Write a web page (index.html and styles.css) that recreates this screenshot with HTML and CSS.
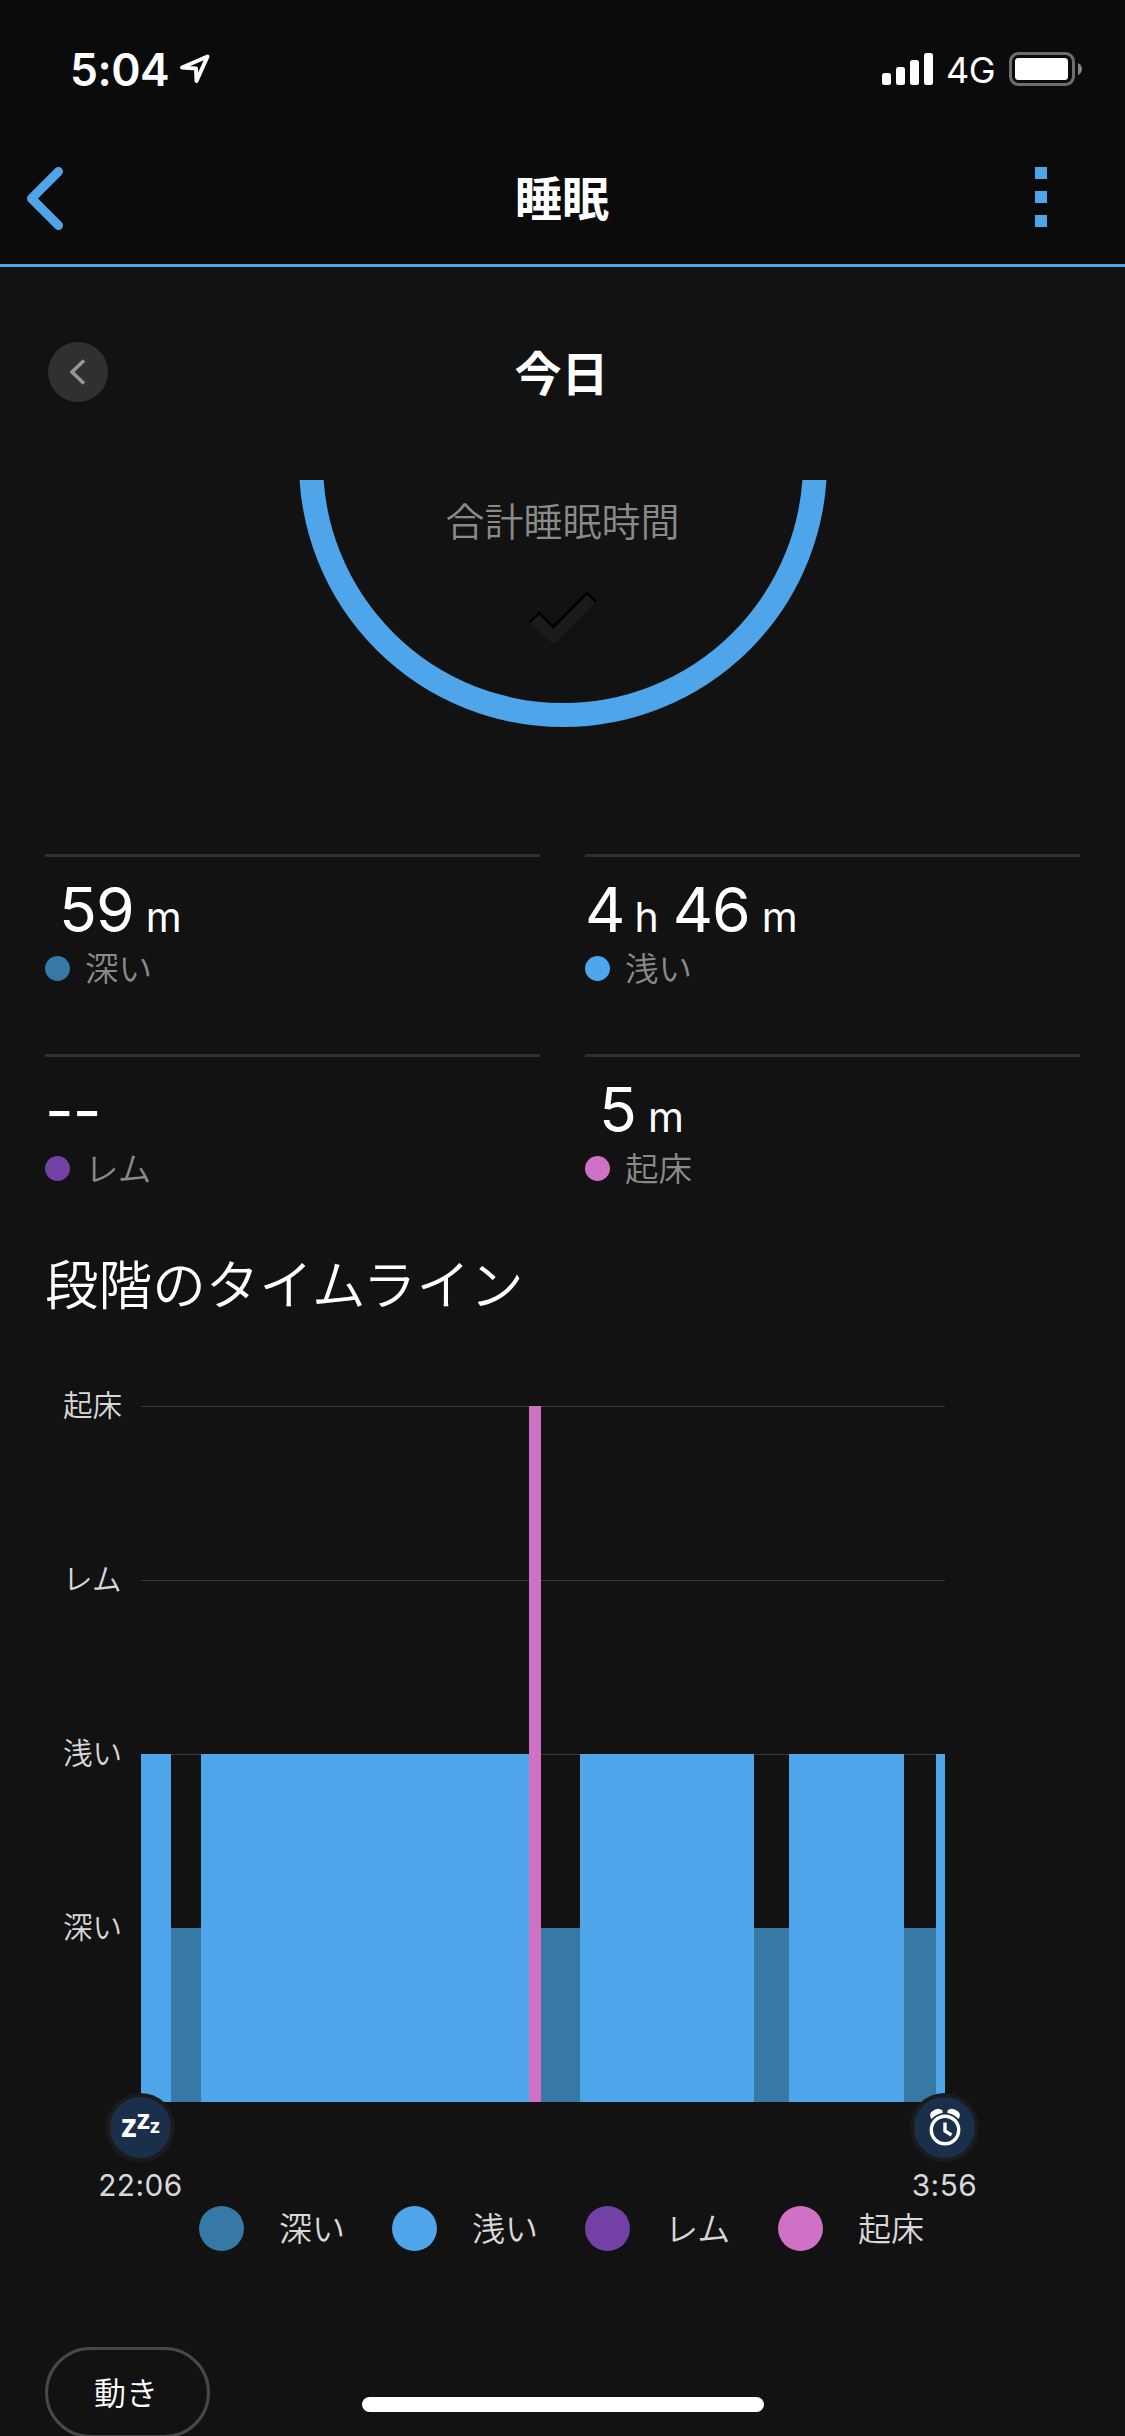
FILE: index.html
```html
<!DOCTYPE html>
<html lang="ja">
<head>
<meta charset="utf-8">
<title>睡眠</title>
<link rel="stylesheet" href="styles.css">
</head>
<body>
<div class="screen">
  <header class="top">
    <div class="status">
      <div class="status-left">
        <span class="clock">5:04</span>
        <svg class="locate" width="32" height="32" viewBox="0 0 32 32"><path d="M3 14.500 28.500 3.500 17.500 28 17 15.500Z"/></svg>
      </div>
      <div class="status-right">
        <svg width="51" height="32" viewBox="0 0 51 32" fill="#fff"><rect y="20" width="9" height="12" rx="2.5"/><rect x="14" y="14" width="9" height="18" rx="2.5"/><rect x="28" y="7" width="9" height="25" rx="2.5"/><rect x="42" width="9" height="32" rx="2.5"/></svg>
        <span class="network">4G</span>
        <svg width="74" height="34" viewBox="0 0 74 34"><rect x="1.5" y="1.5" width="63" height="31" rx="8" fill="none" stroke="#6d6d6d" stroke-width="3"/><rect x="6" y="6" width="53" height="22" rx="3.5" fill="#fff"/><path d="M69 11q4 2 4 6t-4 6z" fill="#858585"/></svg>
      </div>
    </div>
    <nav class="nav">
      <svg class="back" width="44" height="70" viewBox="0 0 44 70"><path d="M36.5 8.5 9.5 35.5 36.5 62.5"/></svg>
      <h1>睡眠</h1>
      <div class="more"><i></i><i></i><i></i></div>
    </nav>
  </header>

  <section class="day">
    <button class="prev"><svg width="60" height="60" viewBox="0 0 60 60"><path d="M36 18.5 24 30 36 41.5"/></svg></button>
    <h2>今日</h2>
  </section>

  <section class="total">
    <svg class="ring" width="528" height="247" viewBox="0 0 528 247"><circle cx="264" cy="-17" r="252"/></svg>
    <div class="total-content">
      <span>合計睡眠時間</span>
      <svg width="68" height="54" viewBox="0 0 68 54"><path d="M1 31 10 22 24.500 36 58 2 67 11 28.500 50Q24.500 54 20.500 50Z" fill="#1b1b1b"/><path d="M1 31 10 22 24.500 36 58 2 67 11" fill="none" stroke="#000" stroke-width="2.500"/></svg>
    </div>
  </section>

  <section class="stats">
    <div class="stat"><p class="value indent">59<small>m</small></p><p class="label"><i class="deep"></i><span>深い</span></p></div>
    <div class="stat"><p class="value">4<small>h</small><b>46</b><small>m</small></p><p class="label"><i class="light"></i><span>浅い</span></p></div>
    <div class="stat"><p class="value none">--</p><p class="label"><i class="rem"></i><span>レム</span></p></div>
    <div class="stat"><p class="value indent">5<small>m</small></p><p class="label"><i class="awake"></i><span>起床</span></p></div>
  </section>

  <h3 class="heading">段階のタイムライン</h3>

  <section class="chart">
    <div class="axis"><span>起床</span><span>レム</span><span>浅い</span><span>深い</span></div>
    <div class="plot">
      <i class="bar light" style="width:30px"></i>
      <i class="bar deep" style="width:30px"></i>
      <i class="bar light" style="width:328px"></i>
      <i class="bar awake" style="width:12px"></i>
      <i class="bar deep" style="width:39px"></i>
      <i class="bar light" style="width:174px"></i>
      <i class="bar deep" style="width:35px"></i>
      <i class="bar light" style="width:115px"></i>
      <i class="bar deep" style="width:32px"></i>
      <i class="bar light" style="width:9px"></i>
    </div>
  </section>

  <section class="ends">
    <div class="end">
      <div class="badge zzz"><span class="z1">z</span><span class="z2">z</span><span class="z3">z</span></div>
      <time>22:06</time>
    </div>
    <div class="end">
      <div class="badge"><svg width="32" height="38" viewBox="0 0 32 38" fill="none" stroke="#fff"><circle cx="16" cy="22" r="13.700" stroke-width="3.400"/><path d="M16 14.500V23L22.500 27" stroke-width="3.400"/><path d="M2.500 11Q-.5 6 3 3.500 9-1.500 13.500 2.500V5Q7 6 2.500 11ZM29.500 11Q32.500 6 29 3.500 23-1.500 18.500 2.500V5Q25 6 29.500 11Z" fill="#fff" stroke="none"/></svg></div>
      <time>3:56</time>
    </div>
  </section>

  <section class="legend">
    <div><i class="deep"></i><span>深い</span></div>
    <div><i class="light"></i><span>浅い</span></div>
    <div><i class="rem"></i><span>レム</span></div>
    <div><i class="awake"></i><span>起床</span></div>
  </section>

  <button class="pill">動き</button>
  <div class="home"></div>
</div>
</body>
</html>
```
FILE: styles.css
```css
* { box-sizing: border-box; margin: 0; padding: 0; }
body {
  background: #121212;
  color: #fff;
  font-family: Inter, "Noto Sans CJK JP", sans-serif;
  font-weight: 400;
}
.screen { position: relative; width: 1125px; height: 2436px; overflow: hidden; }
svg { display: block; }
i { display: block; font-style: normal; }
button { border: 0; color: inherit; font: inherit; }
.deep { background: #3678a6; }
.light { background: #4ea5e9; }
.rem { background: #7340a5; }
.awake { background: #cf72c6; }

.top { height: 267px; background: #0b0b0b; border-bottom: 3px solid #4ea5e9; }
.status { display: flex; justify-content: space-between; height: 138px; padding: 0 42px 0 70px; align-items: center; }
.status-left, .status-right { display: flex; align-items: center; }
.clock { font-size: 44.5px; font-weight: 600; line-height: 54px; width: 109px; padding-top: 1px; letter-spacing: -.5px; }
.locate { fill: none; stroke: #fff; stroke-width: 4; stroke-linejoin: round; }
.network { width: 63px; margin-left: 13px; padding-top: 2px; font-size: 36px; line-height: 44px; letter-spacing: -.5px; }
.nav { display: flex; justify-content: space-between; height: 120px; padding: 0 78px 0 22px; align-items: center; }
.back { fill: none; stroke: #4ea5e9; stroke-width: 9; stroke-linecap: round; stroke-linejoin: round; }
.nav h1 { font-size: 47px; font-weight: 700; line-height: 70px; margin-left: 23px; padding-top: 2px; }
.more { display: grid; gap: 12px; width: 12px; margin-bottom: 2px; }
.more i { height: 12px; background: #4ea5e9; }

.day { display: grid; grid-template-columns: 60px 1fr 60px; align-items: center; height: 213px; padding: 0 48px 3px; }
.prev { width: 60px; height: 60px; border-radius: 50%; background: #303030; }
.prev path { fill: none; stroke: #979797; stroke-width: 3.5; }
.day h2 { font-size: 47px; font-weight: 700; line-height: 70px; text-align: center; padding: 4px 2px 0 0; }

.total { display: grid; justify-content: center; height: 374px; }
.ring, .total-content { grid-area: 1 / 1; }
.ring circle { fill: none; stroke: #4ea5e9; stroke-width: 24; }
.total-content { display: flex; flex-direction: column; align-items: center; padding-top: 12px; color: #8a8a8a; font-size: 39px; font-weight: 350; line-height: 60px; }
.total-content svg { margin-top: 39px; }

.stats { display: grid; grid-template-columns: 495px 495px; grid-auto-rows: 200px; column-gap: 45px; padding: 0 45px; }
.stat { border-top: 3px solid #303030; padding-top: 15px; }
.value { display: flex; align-items: baseline; height: 75px; font-size: 62.5px; line-height: 75px; letter-spacing: -1px; }
.value.indent { padding-left: 14px; }
.value small { font-size: 41px; margin-left: 12px; letter-spacing: 0; }
.value small:not(:last-child) { margin-left: 10px; }
.value b { font-weight: 400; margin-left: 14px; }
.value.none { padding-top: 1px; }
.label { display: flex; align-items: center; gap: 15px; height: 34px; line-height: 34px; margin-top: 4px; color: #8a8a8a; font-size: 33.5px; font-weight: 350; }
.label i { width: 25px; height: 25px; border-radius: 50%; }
.label span { padding-top: 2px; }

.heading { margin: 0 45px; height: 152px; padding-top: 2px; font-size: 53.6px; font-weight: 350; line-height: 60px; }

.chart { display: flex; height: 696px; }
.axis { width: 141px; padding-left: 63px; color: #d8d8d8; font-size: 29.6px; font-weight: 350; }
.axis span { display: block; height: 174px; line-height: 40px; position: relative; top: -21px; }
.plot { display: flex; align-items: flex-end; width: 804px; background: repeating-linear-gradient(#383838 0 1px, transparent 1px 174px); }
.bar.deep { height: 174px; }
.bar.light { height: 348px; }
.bar.awake { height: 696px; }

.ends { display: flex; justify-content: space-between; padding: 0 80px 0 40px; height: 104px; position: relative; top: -9px; }
.end { display: flex; flex-direction: column; align-items: center; width: 201px; }
.end time { margin-top: 5px; color: #d8d8d8; font-size: 29.8px; line-height: 36px; letter-spacing: .5px; }
.badge { display: flex; flex: none; align-items: center; justify-content: center; width: 69px; height: 69px; border: 4px solid #1b1b1b; border-radius: 50%; background: #1a304a; }
.badge svg { margin-bottom: 1px; }
.zzz { align-items: baseline; padding-top: 13px; font-family: "Noto Sans", sans-serif; font-weight: 700; line-height: 30px; }
.zzz span { position: relative; }
.z1 { font-size: 32px; }
.z2 { font-size: 27px; top: -8px; }
.z3 { font-size: 20px; top: -4px; }

.legend { display: flex; padding-left: 199px; height: 141px; }
.legend div { display: flex; align-items: center; width: 193px; height: 45px; gap: 35px; color: #d8d8d8; font-size: 33px; font-weight: 350; }
.legend i { width: 45px; height: 45px; border-radius: 50%; }
.legend span { padding-bottom: 3px; }

.pill { display: block; width: 165px; height: 91px; margin-left: 45px; padding: 0 3px 3px 0; border: 3px solid #484848; border-radius: 46px; background: none; font-size: 32px; font-weight: 350; }
.home { position: absolute; left: 362px; top: 2397px; width: 402px; height: 15px; border-radius: 8px; background: #fff; }
```
